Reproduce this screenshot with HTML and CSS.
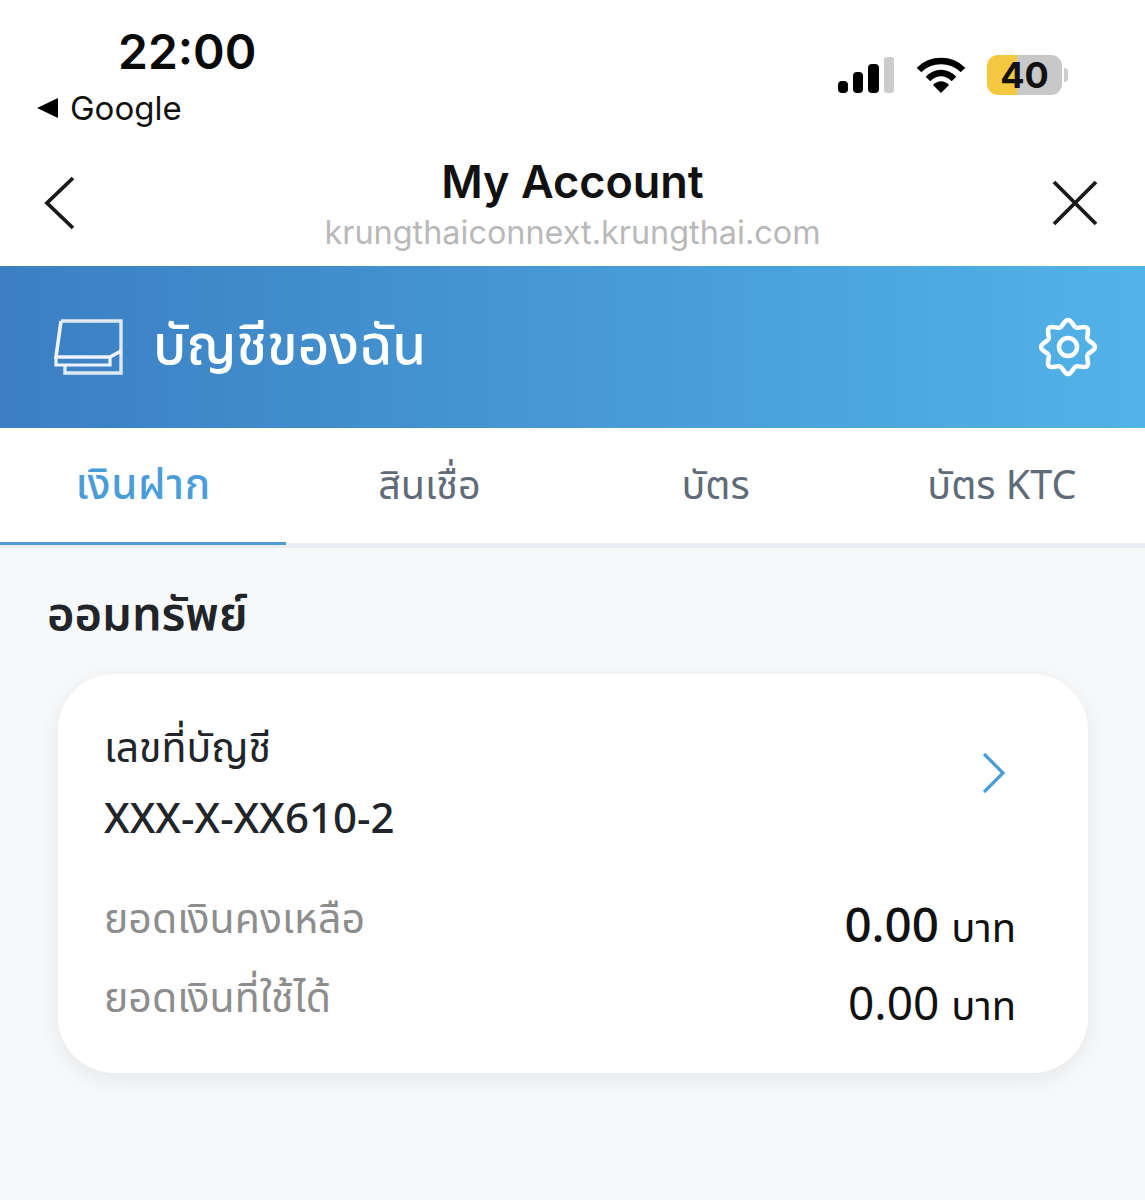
FILE: index.html
```html
<!DOCTYPE html>
<html lang="en">
<head>
  <meta charset="UTF-8" />
  <title>My Account</title>
  <link rel="stylesheet" href="styles.css">
</head>
<body>

  <div class="status">
    <div class="status-left">
      <div class="time">22:00</div>
      <div class="back-app"><span class="back-tri"></span>Google</div>
    </div>
    <div class="status-right">
      <svg class="signal" width="58" height="38" viewBox="0 0 58 38">
        <rect x="1" y="25" width="10" height="12" rx="4" fill="#000"/>
        <rect x="16" y="16" width="10" height="21" rx="4" fill="#000"/>
        <rect x="31" y="8" width="11" height="29" rx="4" fill="#000"/>
        <rect x="47" y="1" width="10" height="36" rx="3" fill="#ccc"/>
      </svg>
      <svg class="wifi" width="50" height="38" viewBox="0 0 50 38">
        <path d="M3 14 C15 2 35 2 47 14" fill="none" stroke="#000" stroke-width="6.5"/>
        <path d="M12 23 C20 15 30 15 38 23" fill="none" stroke="#000" stroke-width="6.5"/>
        <path d="M17 29 C22 24 28 24 33 29 L25 37 Z" fill="#000"/>
      </svg>
      <div class="battery"><div class="battery-num">40</div></div>
      <div class="battery-tip"></div>
    </div>
  </div>

  <div class="navbar">
    <svg class="nav-icon" width="32" height="56" viewBox="0 0 32 56">
      <path d="M29 3 L3 28 L29 53" fill="none" stroke="#1a1a1a" stroke-width="3.8"/>
    </svg>
    <div class="nav-title">
      <div class="title">My Account</div>
      <div class="url">krungthaiconnext.krungthai.com</div>
    </div>
    <svg class="nav-icon" width="46" height="46" viewBox="0 0 46 46">
      <path d="M2 2 L44 44 M44 2 L2 44" fill="none" stroke="#1a1a1a" stroke-width="3.8"/>
    </svg>
  </div>

  <div class="banner">
    <div class="banner-left">
      <svg class="book" width="70" height="58" viewBox="0 0 70 58">
        <path d="M7 3 L67 3 L67 55 L11 55 L11 48" fill="none" stroke="#dfe9f3" stroke-width="3.4"/>
        <path d="M7 3 L2 39 L56 39 L67 33" fill="none" stroke="#eef4fa" stroke-width="3.6"/>
        <path d="M2 39 L2 47 L56 47 L56 39" fill="none" stroke="#eef4fa" stroke-width="3.2"/>
      </svg>
      <span class="banner-title">บัญชีของฉัน</span>
    </div>
    <svg width="60" height="60" viewBox="0 0 60 60">
      <defs>
        <path id="lobe" d="M22 10.6 C24.8 9.5 26 3 30 3 C34 3 35.2 9.5 38 10.6" fill="none" stroke="#fff" stroke-width="4.5"/>
      </defs>
      <use href="#lobe"/>
      <use href="#lobe" transform="rotate(45 30 30)"/>
      <use href="#lobe" transform="rotate(90 30 30)"/>
      <use href="#lobe" transform="rotate(135 30 30)"/>
      <use href="#lobe" transform="rotate(180 30 30)"/>
      <use href="#lobe" transform="rotate(225 30 30)"/>
      <use href="#lobe" transform="rotate(270 30 30)"/>
      <use href="#lobe" transform="rotate(315 30 30)"/>
      <circle cx="30" cy="30" r="9" fill="none" stroke="#fff" stroke-width="4.5"/>
    </svg>
  </div>

  <div class="tabs">
    <div class="tab active">เงินฝาก</div>
    <div class="tab">สินเชื่อ</div>
    <div class="tab">บัตร</div>
    <div class="tab">บัตร KTC</div>
  </div>

  <div class="content">
    <h2 class="section-title">ออมทรัพย์</h2>
    <div class="card">
      <div class="card-top">
        <div>
          <div class="acc-label">เลขที่บัญชี</div>
          <div class="acc-num">XXX-X-XX610-2</div>
        </div>
        <svg class="chevron" width="24" height="42" viewBox="0 0 24 42">
          <path d="M2 2 L21 21 L2 40" fill="none" stroke="#4a9dd8" stroke-width="3.2"/>
        </svg>
      </div>
      <div class="row">
        <span class="row-label">ยอดเงินคงเหลือ</span>
        <span class="row-val strong">0.00 <small>บาท</small></span>
      </div>
      <div class="row">
        <span class="row-label">ยอดเงินที่ใช้ได้</span>
        <span class="row-val">0.00 <small>บาท</small></span>
      </div>
    </div>
  </div>

</body>
</html>
```

FILE: styles.css
```css
* { margin: 0; padding: 0; box-sizing: border-box; }
html, body {
  height: 100%; width: 100%;
  font-family: 'Noto Sans', 'Noto Sans Thai', 'Noto Sans CJK SC', sans-serif;
  background-color: #f7f8fa;
  overflow: hidden;
}
.status {
  height: 140px;
  background: #fff;
  display: flex;
  justify-content: space-between;
  padding: 22px 77px 0 37px;
}
.time {
  font-family: 'Inter', sans-serif;
  font-size: 48px;
  font-weight: 600;
  line-height: 60px;
  padding-left: 81px;
  color: #0a0a0a;
}
.back-app {
  font-family: 'Inter', sans-serif;
  font-size: 33px;
  line-height: 52px;
  color: #111;
  display: flex;
  align-items: center;
  gap: 12px;
}
.back-tri {
  width: 0; height: 0;
  border-top: 10px solid transparent;
  border-bottom: 10px solid transparent;
  border-right: 21px solid #000;
}
.status-right {
  display: flex;
  align-items: center;
  height: 106px;
}
.signal { margin-right: 21px; }
.wifi { margin-right: 21px; }
.battery {
  width: 75px;
  height: 40px;
  border-radius: 11px;
  background: linear-gradient(to right, #f4c93f 40%, #c8c8c8 40%);
  text-align: center;
}
.battery-num {
  font-family: 'Inter', sans-serif;
  font-size: 36px;
  font-weight: 700;
  line-height: 40px;
  color: #111;
}
.battery-tip {
  width: 4px; height: 14px;
  margin-left: 2px;
  background: #ccc;
  border-radius: 0 6px 6px 0;
}
.navbar {
  height: 126px;
  background: #fff;
  display: flex;
  justify-content: space-between;
  align-items: center;
  padding: 0 47px 0 44px;
}
.nav-title {
  text-align: center;
  margin-left: 17px;
  padding-top: 6px;
}
.title {
  font-family: 'Inter', sans-serif;
  font-size: 45px;
  font-weight: 600;
  line-height: 54px;
  color: #111;
}
.url {
  font-family: 'Inter', sans-serif;
  font-size: 32.4px;
  line-height: 48px;
  color: #b9b9b9;
}
.banner {
  height: 162px;
  background: linear-gradient(to right, #3b7fc2, #52b3e8);
  display: flex;
  justify-content: space-between;
  align-items: center;
  padding: 0 47px 0 54px;
}
.banner-left {
  display: flex;
  align-items: center;
  gap: 29px;
}
.book { filter: blur(0.7px); }
.banner-title {
  font-size: 54.5px;
  font-weight: 500;
  color: #fff;
}
.tabs {
  height: 120px;
  background: #fff;
  display: grid;
  grid-template-columns: repeat(4, 1fr);
  border-bottom: 5px solid #e9edf1;
}
.tab {
  font-size: 39.5px;
  color: #5f6b78;
  display: flex;
  justify-content: center;
  align-items: center;
  height: 117px;
}
.tab.active {
  font-size: 42px;
  font-weight: 500;
  letter-spacing: 0.7px;
  padding-top: 2px;
  color: #4a9dd8;
  border-bottom: 3px solid #4f9bd3;
}
.content { padding: 0 57px 0 47px; }
.section-title {
  font-size: 47px;
  font-weight: 600;
  line-height: 60px;
  color: #212529;
  margin: 34px 0 32px;
}
.card {
  margin-left: 11px;
  height: 399px;
  background: #fff;
  border-radius: 56px;
  box-shadow: 0 6px 22px rgba(0,0,0,0.07);
  padding: 47px 72px 0 46px;
}
.card-top {
  display: flex;
  justify-content: space-between;
  align-items: center;
  margin-bottom: 34px;
}
.chevron { margin: 0 10px 21px 0; }
.acc-label {
  font-size: 41px;
  line-height: 50px;
  color: #212529;
}
.acc-num {
  font-size: 42px;
  font-weight: 500;
  line-height: 58px;
  margin-top: 17px;
  color: #212529;
}
.row {
  display: flex;
  justify-content: space-between;
  align-items: center;
  height: 79px;
}
.row-label {
  font-size: 41px;
  color: #8d8d8d;
}
.row-val {
  font-size: 46px;
  color: #111;
  padding-top: 12px;
}
.row-val.strong {
  font-size: 47.5px;
  font-weight: 500;
}
.row-val small {
  font-size: 40px;
  font-weight: 400;
}
```
